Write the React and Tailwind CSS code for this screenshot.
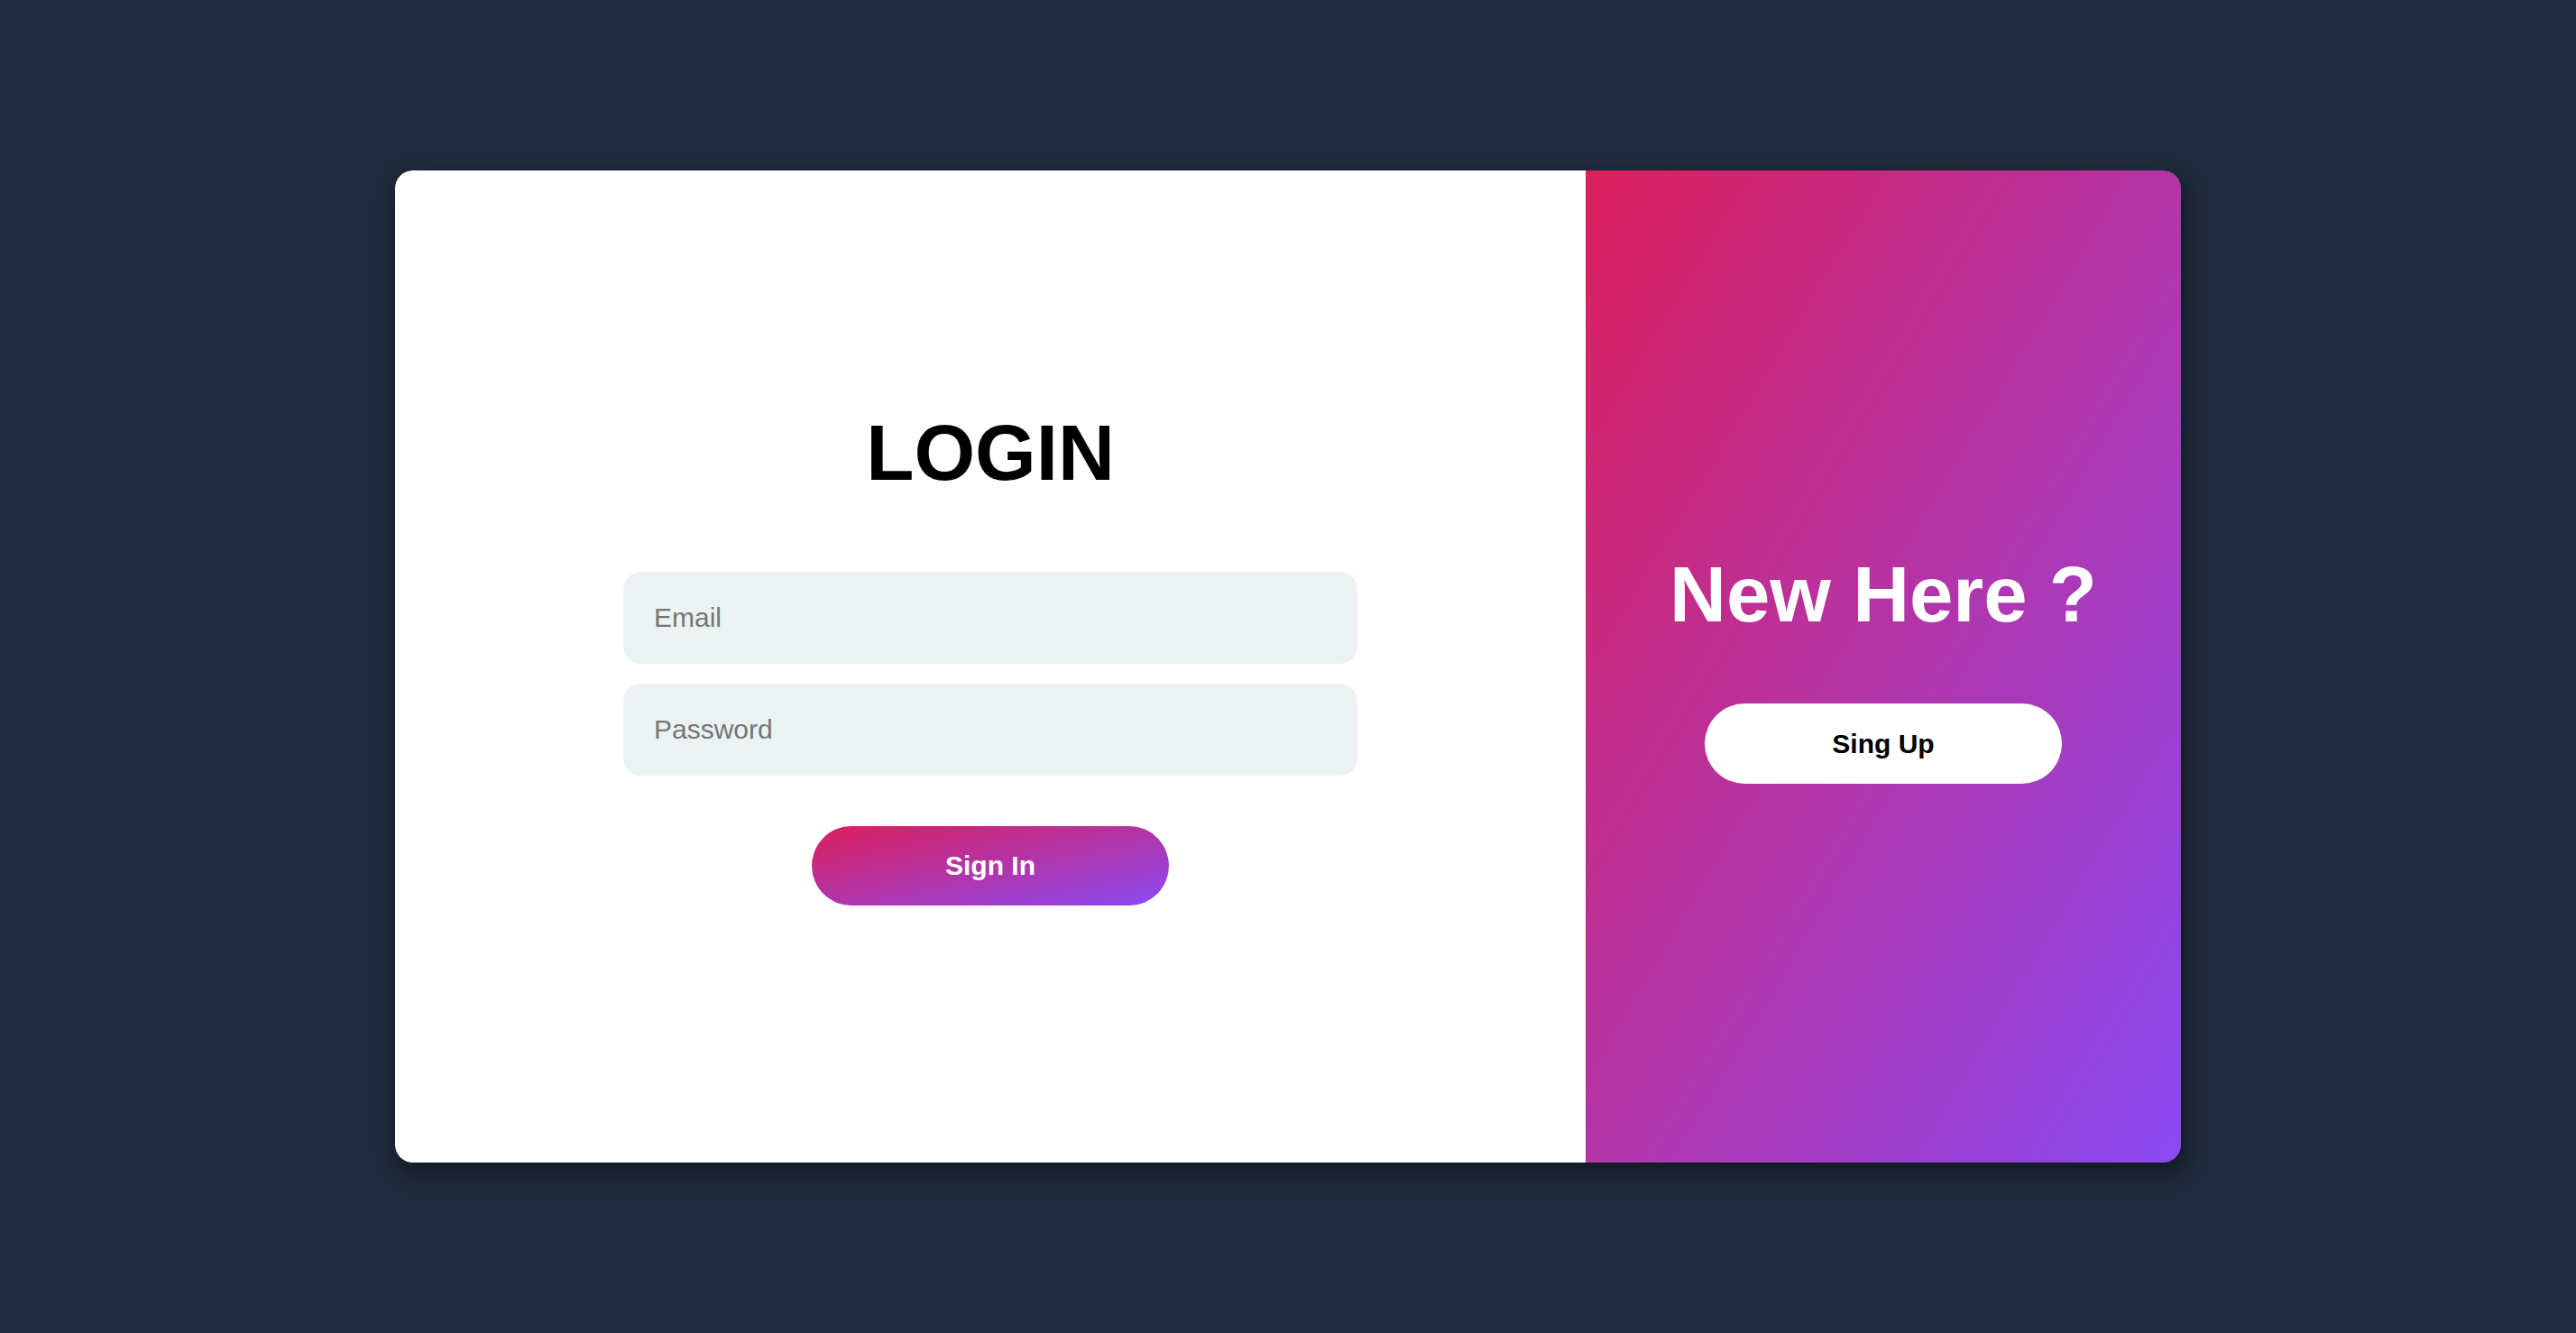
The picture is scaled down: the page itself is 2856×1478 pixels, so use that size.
export default function App() {
  return (
    <div className="min-h-screen w-full bg-[#1f2a3c] flex items-center justify-center font-['Liberation_Sans',Arial,sans-serif]">
      <div className="w-[1980px] h-[1100px] rounded-[20px] overflow-hidden flex shadow-[4px_10px_24px_rgba(0,0,0,0.45)]">
        {/* login side */}
        <div className="w-[1320px] bg-white flex flex-col items-center justify-center pb-[17px]">
          <h1 className="text-[87px] leading-none font-bold text-black">LOGIN</h1>
          <form className="mt-[89px] flex flex-col items-center gap-[22px]" onSubmit={(e) => e.preventDefault()}>
            <input
              type="email"
              placeholder="Email"
              className="w-[814px] h-[102px] rounded-[20px] bg-[#eaf3f2] pl-[34px] text-[30px] text-black placeholder:text-[#757575] outline-none"
            />
            <input
              type="password"
              placeholder="Password"
              className="w-[814px] h-[102px] rounded-[20px] bg-[#eaf3f2] pl-[34px] text-[30px] text-black placeholder:text-[#757575] outline-none"
            />
            <button
              type="submit"
              className="mt-[34px] w-[396px] h-[88px] rounded-full bg-linear-to-br/srgb from-[#dc1f5c] to-[#8a4af3] text-white text-[30px] font-bold"
            >
              Sign In
            </button>
          </form>
        </div>

        {/* sign up side */}
        <div className="flex-1 bg-linear-to-br/srgb from-[#dc1f5c] to-[#8a4af3] flex flex-col items-center justify-center pt-[6px]">
          <h2 className="text-[87px] leading-none font-bold text-white">New Here ?</h2>
          <button className="mt-[78px] w-[396px] h-[89px] rounded-full bg-white text-black text-[30px] font-bold">
            Sing Up
          </button>
        </div>
      </div>
    </div>
  );
}
